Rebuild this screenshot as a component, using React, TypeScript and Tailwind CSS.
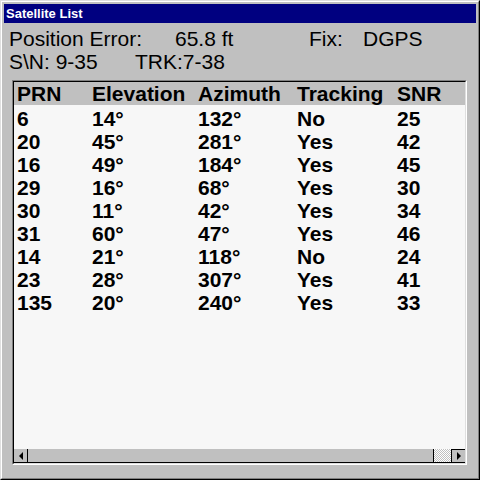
import React from "react"

const rows = [
    ["6", "14°", "132°", "No", "25"],
    ["20", "45°", "281°", "Yes", "42"],
    ["16", "49°", "184°", "Yes", "45"],
    ["29", "16°", "68°", "Yes", "30"],
    ["30", "11°", "42°", "Yes", "34"],
    ["31", "60°", "47°", "Yes", "46"],
    ["14", "21°", "118°", "No", "24"],
    ["23", "28°", "307°", "Yes", "41"],
    ["135", "20°", "240°", "Yes", "33"],
]

const cols = "grid grid-cols-[75px_106px_99px_100px_1fr] pl-[3px]"

function ScrollBar() {
    return (
        <div className="flex h-[14px] bg-[#c0c0c0] border-b border-b-[#000]">
            <div className="w-[14px] flex items-center justify-center border-r border-r-[#000]">
                <svg width="4" height="8" viewBox="0 0 4 8"><path d="M4 0 L0 4 L4 8 Z" fill="#000" /></svg>
            </div>
            <div className="flex-1"></div>
            <div className="w-[18px] border-l border-l-[#000] bg-[repeating-conic-gradient(#c0c0c0_0_25%,#ffffff_0_50%)] bg-[length:2px_2px]"></div>
            <div className="w-[14px] flex items-center justify-center border-l border-l-[#000] border-t border-t-[#000]">
                <svg width="4" height="8" viewBox="0 0 4 8"><path d="M0 0 L4 4 L0 8 Z" fill="#000" /></svg>
            </div>
        </div>
    )
}

export default function App() {
    return (
        <div className="w-[480px] h-[480px] bg-[#c0c0c0] border-t border-l border-t-[#dfdfdf] border-l-[#dfdfdf] border-r border-b border-r-[#000] border-b-[#000] font-['Liberation_Sans',Arial,sans-serif] text-black">
            <div className="w-full h-full border-t border-l border-t-[#fff] border-l-[#fff] border-r border-b border-r-[#808080] border-b-[#808080] p-[2px] flex flex-col">
                <div className="h-[19px] bg-[#000080] text-white font-bold text-[13px] leading-[19px] pl-[2px]">
                    Satellite List
                </div>
                <div className="mt-[4px] pl-[5px] text-[21px] leading-[23px]">
                    <div className="flex">
                        <span className="w-[166px]">Position Error:</span>
                        <span className="w-[134px]">65.8 ft</span>
                        <span className="w-[54px]">Fix:</span>
                        <span>DGPS</span>
                    </div>
                    <div className="flex">
                        <span className="w-[126px]">S\N: 9-35</span>
                        <span>TRK:7-38</span>
                    </div>
                </div>
                <div className="mt-[7px] mb-[11px] ml-[8px] mr-[9px] flex-1 flex flex-col border-t border-l border-t-[#808080] border-l-[#808080] border-r border-b border-r-[#fff] border-b-[#fff]">
                    <div className="flex-1 flex flex-col border-t border-l border-t-[#000] border-l-[#000] border-r border-b border-r-[#dfdfdf] border-b-[#dfdfdf]">
                        <div className={`${cols} h-[23px] bg-[#c0c0c0] font-bold text-[21px] leading-[23px]`}>
                            <span>PRN</span>
                            <span>Elevation</span>
                            <span>Azimuth</span>
                            <span>Tracking</span>
                            <span>SNR</span>
                        </div>
                        <div className="flex-1 bg-[#f7f7f7] pt-[2px] font-bold text-[21px] leading-[23px]">
                            {rows.map((r, i) => (
                                <div key={i} className={cols}>
                                    {r.map((c, j) => <span key={j}>{c}</span>)}
                                </div>
                            ))}
                        </div>
                        <ScrollBar />
                    </div>
                </div>
            </div>
        </div>
    )
}
